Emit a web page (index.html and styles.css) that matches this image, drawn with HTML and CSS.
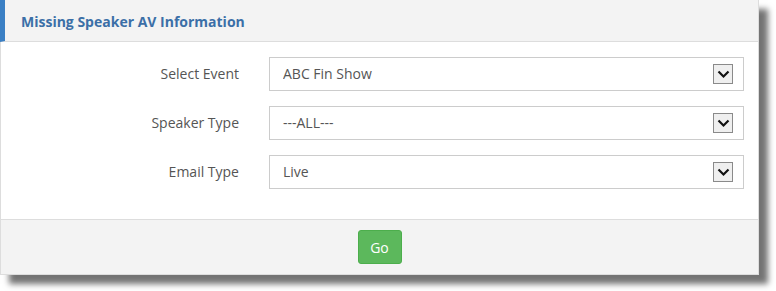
FILE: index.html
```html
<!DOCTYPE html>
<html lang="en">
<head>
    <meta charset="UTF-8">
    <meta name="viewport" content="width=device-width, initial-scale=1.0">
    <title>Missing Speaker AV Information</title>
    <link rel="stylesheet" href="styles.css">
</head>
<body>
    <div class="panel">
        <div class="panel-heading">
            <h3>Missing Speaker AV Information</h3>
        </div>
        <form id="avForm">
            <div class="panel-body">
                <label for="event">Select Event</label>
                <div class="select-wrap">
                    <select id="event" name="event">
                        <option>ABC Fin Show</option>
                    </select>
                    <span class="arrow"><svg width="13" height="9" viewBox="0 0 13 9"><path d="M1.5 1.5 L6.5 6.5 L11.5 1.5" fill="none" stroke="#111" stroke-width="2.2"/></svg></span>
                </div>

                <label for="speakerType">Speaker Type</label>
                <div class="select-wrap">
                    <select id="speakerType" name="speakerType">
                        <option>---ALL---</option>
                    </select>
                    <span class="arrow"><svg width="13" height="9" viewBox="0 0 13 9"><path d="M1.5 1.5 L6.5 6.5 L11.5 1.5" fill="none" stroke="#111" stroke-width="2.2"/></svg></span>
                </div>

                <label for="emailType">Email Type</label>
                <div class="select-wrap">
                    <select id="emailType" name="emailType">
                        <option>Live</option>
                    </select>
                    <span class="arrow"><svg width="13" height="9" viewBox="0 0 13 9"><path d="M1.5 1.5 L6.5 6.5 L11.5 1.5" fill="none" stroke="#111" stroke-width="2.2"/></svg></span>
                </div>
            </div>
            <div class="panel-footer">
                <button type="submit" class="btn-go">Go</button>
            </div>
        </form>
    </div>
</body>
</html>
```

FILE: styles.css
```css
body {
    font-family: "Open Sans", Arial, sans-serif;
    margin: 0;
    padding-bottom: 16px;
    background-color: #fff;
    color: #555;
}
.panel {
    width: 757px;
    border: 1px solid #ddd;
    background-color: #fff;
    box-shadow: 9px 9px 6px rgba(0, 0, 0, 0.55);
}
.panel-heading {
    height: 40px;
    display: flex;
    align-items: center;
    padding-left: 16px;
    background-color: #f3f3f3;
    border-left: 5px solid #3a7fc4;
    border-bottom: 1px solid #ddd;
    margin-left: -1px;
    margin-top: -1px;
    padding-top: 1px;
}
.panel-heading h3 {
    margin: 0;
    font-size: 14px;
    font-weight: bold;
    color: #3b6fa7;
}
.panel-body {
    display: grid;
    grid-template-columns: 238px 1fr;
    column-gap: 30px;
    row-gap: 15px;
    align-items: center;
    padding: 15px 14px 30px 0;
}
label {
    text-align: right;
    font-size: 14px;
    color: #555;
    padding-bottom: 1px;
}
.select-wrap {
    position: relative;
}
select {
    -webkit-appearance: none;
    appearance: none;
    display: block;
    width: 100%;
    height: 34px;
    padding: 0 12px 2px 13px;
    border: 1px solid #ccc;
    border-radius: 0;
    background-color: #fff;
    font-family: "Open Sans", Arial, sans-serif;
    font-size: 14px;
    color: #555;
}
.arrow {
    position: absolute;
    right: 11px;
    top: 7px;
    width: 18px;
    height: 18px;
    display: flex;
    align-items: center;
    justify-content: center;
    border: 1px solid #8a8a8a;
    background-color: #efefef;
    pointer-events: none;
}
.panel-footer {
    display: flex;
    justify-content: center;
    padding: 10px 0 10px 0;
    background-color: #f3f3f3;
    border-top: 1px solid #ddd;
}
.btn-go {
    width: 44px;
    height: 34px;
    border: 1px solid #4cae4c;
    border-radius: 3px;
    background-color: #5cb85c;
    color: #fff;
    font-family: "Open Sans", Arial, sans-serif;
    font-size: 14px;
    cursor: pointer;
}
```
